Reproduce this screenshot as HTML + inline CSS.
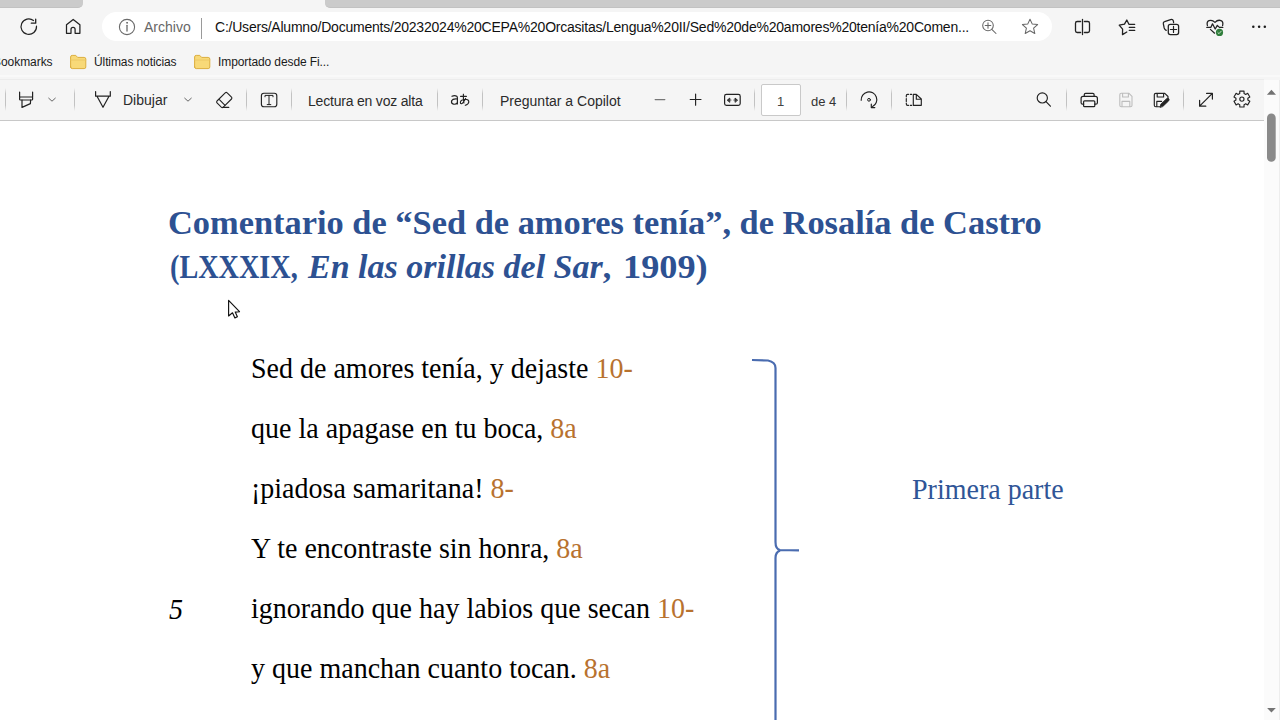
<!DOCTYPE html>
<html><head><meta charset="utf-8">
<style>
*{margin:0;padding:0;box-sizing:border-box}
html,body{width:1280px;height:720px;overflow:hidden;background:#fff;font-family:"Liberation Sans",sans-serif}
#chrome{position:absolute;left:0;top:0;width:1280px;height:121px;background:#f5f5f5}
.tabg{position:absolute;top:0;height:8px;background:#cbcbcb;border-bottom:1px solid #c2c2c2}
#addr{position:absolute;left:102px;top:12px;width:950px;height:29px;background:#fff;border-radius:15px}
.t{position:absolute;font-family:"Liberation Sans",sans-serif;color:#1b1b1b;white-space:nowrap;line-height:1}
#pdfbar{position:absolute;left:0;top:79px;width:1264px;height:42px;background:#f5f5f5;border-top:1px solid #ececec;border-bottom:1px solid #c8c8c8}
.sep{position:absolute;width:1px;top:88px;height:23px;background:linear-gradient(rgba(200,200,200,0),#c2c2c2 25%,#c2c2c2 75%,rgba(200,200,200,0))}
svg.i{position:absolute;left:0;top:0;overflow:visible;fill:none;stroke:#222;stroke-width:1.15;stroke-linecap:round;stroke-linejoin:round}
#doc{position:absolute;left:0;top:121px;width:1264px;height:599px;background:#fff}
.s{position:absolute;font-family:"Liberation Serif",serif;white-space:nowrap;line-height:1}
.title{font-weight:bold;color:#2d5192;font-size:34px;transform-origin:0 0}
.verse{color:#000;font-size:28px;transform-origin:0 0;transform:scaleY(1.04)}
.met{color:#b8722f}
#sb{position:absolute;left:1264px;top:80px;width:16px;height:640px;background:#fbfbfb}
</style></head><body>
<div id="chrome">
  <div class="tabg" style="left:0;width:83px;border-radius:0 0 5px 0"></div>
  <div class="tabg" style="left:325px;width:955px;border-radius:0 0 0 5px"></div>
  <div id="addr"></div>
  <div style="position:absolute;left:0;top:75px;width:1280px;height:2px;background:#f9f9f9"></div>
  <div id="pdfbar"></div>
</div>

<!-- top nav icons -->
<svg class="i" width="1" height="1">
  <!-- refresh -->
  <path d="M36.5 26.2 A7.75 7.75 0 1 1 33.5 20.5" stroke-width="1.2"/>
  <path d="M35.7 19.2 L35.7 23.2 L31.3 23.2" stroke-width="1.3"/>
  <!-- home -->
  <path d="M66.5 33.3 L66.5 24.8 L73.2 19.4 L79.9 24.8 L79.9 33.3 L75.1 33.3 L75.1 29.5 A2.05 2.05 0 0 0 71 29.5 L71 33.3 Z" stroke-width="1.25"/>
  <!-- info -->
  <circle cx="127" cy="27" r="7.6" stroke="#6a6a6a" stroke-width="1.1"/>
  <path d="M127 25.3 L127 31" stroke="#6a6a6a" stroke-width="1.3"/>
  <circle cx="127" cy="22.8" r="0.5" fill="#6a6a6a" stroke="#6a6a6a" stroke-width="0.9"/>
  <!-- zoom -->
  <circle cx="988" cy="25.5" r="5.3" stroke="#666" stroke-width="1.05"/>
  <path d="M985.2 25.5 L990.8 25.5 M988 22.7 L988 28.3 M991.8 29.3 L996 33.5" stroke="#666" stroke-width="1.05"/>
  <!-- star -->
  <path d="M1030 19.2 L1032.3 24.1 L1037.6 24.6 L1033.6 28.2 L1034.8 33.5 L1030 30.8 L1025.2 33.5 L1026.4 28.2 L1022.4 24.6 L1027.7 24.1 Z" stroke="#666" stroke-width="1.05"/>
  <!-- split screen -->
  <path d="M1080.6 21.5 L1077.2 21.5 Q1075.5 21.5 1075.5 23.2 L1075.5 30.8 Q1075.5 32.5 1077.2 32.5 L1080.6 32.5 M1084.4 21.5 L1087.8 21.5 Q1089.5 21.5 1089.5 23.2 L1089.5 30.8 Q1089.5 32.5 1087.8 32.5 L1084.4 32.5 M1082.5 19.3 L1082.5 34.6" stroke-width="1.3"/>
  <!-- favorites -->
  <path d="M1126.8 32 L1122.5 34.6 L1122.6 29.2 L1119.2 25.2 L1124.5 24.1 L1126.8 20 L1128.9 24.3 L1134.7 24.3 M1129.3 27.4 L1134.7 27.4 M1129.3 30.4 L1134.7 30.4" stroke-width="1.3"/>
  <!-- collections -->
  <path d="M1166.2 30.4 Q1164.6 29.5 1164.2 28 L1163.3 23.6 Q1163 22 1164.6 21.6 L1170.6 19.6 Q1172.8 19 1173.4 21 L1173.6 22.6" stroke-width="1.25"/>
  <rect x="1168.3" y="24.3" width="10.3" height="10.3" rx="2" stroke-width="1.3"/>
  <path d="M1173.5 26.4 L1173.5 32.5 M1170.4 29.5 L1176.6 29.5" stroke-width="1.2"/>
  <!-- health -->
  <path d="M1207.4 25.6 Q1206.4 21.6 1209 20.6 Q1212.2 19.4 1215 22.4 Q1217.8 19.4 1221 20.6 Q1223.6 21.6 1222.6 25.6" stroke-width="1.25"/>
  <path d="M1206.8 27.4 L1210.8 27.4 L1212.5 23.8 L1215.2 29 L1217.3 25.4 L1219.4 27.4 L1222.8 27.4 M1210.4 29.4 L1214.6 33.2" stroke-width="1.25"/>
  <circle cx="1219.5" cy="32.4" r="3.6" fill="#2f7d3b" stroke="none"/>
  <path d="M1217.9 32.6 L1219 33.7 L1221.2 31.2" stroke="#cfe8cf" stroke-width="0.9"/>
  <!-- more -->
  <circle cx="1253.3" cy="26.8" r="1.25" fill="#1a1a1a" stroke="none"/>
  <circle cx="1259.1" cy="26.8" r="1.25" fill="#1a1a1a" stroke="none"/>
  <circle cx="1264.8" cy="26.8" r="1.25" fill="#1a1a1a" stroke="none"/>
</svg>
<div style="position:absolute;left:201px;top:18px;width:1px;height:21px;background:#9a9a9a"></div>

<div class="t" style="left:144px;top:20px;font-size:14px;letter-spacing:0px;color:#676767">Archivo</div>
<div class="t" style="left:215px;top:20px;font-size:14px;letter-spacing:-0.22px;color:#111">C:/Users/Alumno/Documents/20232024%20CEPA%20Orcasitas/Lengua%20II/Sed%20de%20amores%20tenía%20Comen...</div>

<!-- bookmarks bar -->
<div class="t" style="left:-7px;top:56px;font-size:12px;letter-spacing:-0.05px">Bookmarks</div>
<svg class="i" width="1" height="1">
  <path d="M70.6 67 L70.6 57 Q70.6 55.4 72.2 55.4 L75.8 55.4 L77.6 57.4 L84.2 57.4 Q85.8 57.4 85.8 59 L85.8 67 Q85.8 68.6 84.2 68.6 L72.2 68.6 Q70.6 68.6 70.6 67 Z" fill="#f8d978" stroke="#dcae3e" stroke-width="1"/>
  <path d="M70.6 60 L85.8 60" stroke="#e8c460" stroke-width="0.8"/>
  <path d="M194.6 67 L194.6 57 Q194.6 55.4 196.2 55.4 L199.8 55.4 L201.6 57.4 L208.2 57.4 Q209.8 57.4 209.8 59 L209.8 67 Q209.8 68.6 208.2 68.6 L196.2 68.6 Q194.6 68.6 194.6 67 Z" fill="#f8d978" stroke="#dcae3e" stroke-width="1"/>
  <path d="M194.6 60 L209.8 60" stroke="#e8c460" stroke-width="0.8"/>
</svg>
<div class="t" style="left:94px;top:56px;font-size:12px;letter-spacing:-0.1px">Últimas noticias</div>
<div class="t" style="left:218px;top:56px;font-size:12px;letter-spacing:-0.1px">Importado desde Fi...</div>

<!-- pdf toolbar -->
<div class="sep" style="left:5px"></div>
<div class="sep" style="left:74px"></div>
<div class="sep" style="left:246px"></div>
<div class="sep" style="left:291px"></div>
<div class="sep" style="left:437px"></div>
<div class="sep" style="left:482px"></div>
<div class="sep" style="left:754px"></div>
<div class="sep" style="left:846px"></div>
<div class="sep" style="left:891px"></div>
<div class="sep" style="left:1066px"></div>
<div class="sep" style="left:1183px"></div>

<svg class="i" width="1" height="1">
  <!-- highlighter -->
  <path d="M19.6 92 L19.6 97 M32.6 92 L32.6 97" stroke-width="1.2"/>
  <rect x="19.6" y="97" width="13" height="3" rx="0.8" stroke-width="1.2"/>
  <path d="M22 100 L22 107.4 L30.4 103.6 L30.6 100" stroke-width="1.2"/>
  <path d="M48.7 98.2 L52 101.2 L55.3 98.2" stroke="#555" stroke-width="0.9"/>
  <!-- draw -->
  <path d="M95.6 91.5 L95.6 96.2 M110.3 91.5 L110.3 96.2 M95.6 96.2 L110.3 96.2 M97 96.2 L103 107.3 L109 96.2" stroke-width="1.2"/>
  <path d="M184.7 98.2 L188 101.2 L191.3 98.2" stroke="#555" stroke-width="0.9"/>
  <!-- eraser -->
  <path d="M217 101 L225.2 92.8 Q226.2 91.9 227.2 92.8 L231.5 97.1 Q232.4 98.1 231.5 99 L223.3 107.2 Q222.3 108.1 221.3 107.2 L217 102.9 Q216.1 102 217 101 Z" stroke-width="1.1"/>
  <path d="M219.4 99.6 L224.8 105.1 M222.5 107.4 L228.8 107.4" stroke-width="1.1"/>
  <!-- T box -->
  <rect x="261.4" y="93.2" width="15.4" height="13.5" rx="2.5" stroke-width="1.15"/>
  <path d="M265 96.8 L265 95.4 L273 95.4 L273 96.8 M269 95.4 L269 104.6 M267.2 104.6 L270.8 104.6" stroke-width="1"/>
  <!-- aあ -->
  <path d="M452 96.3 Q454.6 94.8 456.8 96.3 Q457.4 96.8 457.4 98 L457.4 104 M457.4 99 Q452.8 98.4 451.6 100.8 Q451 103.6 453.6 104.2 Q456.2 104.6 457.4 102.6" stroke-width="1.2"/>
  <path d="M460.6 96.4 L466.4 96.4 M463.4 94.2 Q463.2 99.5 463.9 103 M465.6 98.4 Q462.9 103.6 461.2 103.8 Q460.3 103.7 460.4 102.2 Q460.9 99.6 465.2 99.2 Q468.9 99.3 468.8 102 Q468.5 104.4 465.3 105.3" stroke-width="1.15"/>
  <!-- minus / plus -->
  <path d="M655.2 99.6 L664.8 99.6" stroke="#777" stroke-width="1.3"/>
  <path d="M690.2 99.5 L701 99.5 M695.6 94 L695.6 105.2" stroke-width="1.15"/>
  <!-- fit width -->
  <rect x="724.6" y="94.4" width="15.6" height="11" rx="1.8" stroke-width="1.2"/>
  <path d="M727.4 100 L729.8 98 L729.8 102 Z M737.4 100 L735 98 L735 102 Z" fill="#222" stroke-width="0.8"/>
  <path d="M729.5 100 L731 100 M733.8 100 L735.3 100" stroke-width="1.1" stroke="#555"/>
  <!-- rotate -->
  <path d="M861.2 100.3 A7.8 7.8 0 1 1 872.6 106.6" stroke-width="1.15"/>
  <path d="M871.3 104.2 L871.3 107.6 L874.8 107.6" stroke-width="1.2"/>
  <circle cx="869" cy="99.8" r="1.4" stroke-width="1"/>
  <!-- two pages -->
  <path d="M911.7 94.3 L910.3 94.3 M908.6 94.3 L907.6 94.3 Q906.3 94.3 906.3 95.6 L906.3 96.8 M906.3 98.6 L906.3 101.4 M906.3 103 L906.3 104 Q906.3 105.3 907.6 105.3 L908.6 105.3 M910.3 105.3 L911.7 105.3" stroke-width="1.15"/>
  <path d="M913.3 94.3 L916.3 94.3 L921.3 99 L921.3 105.3 L913.3 105.3 Z M916.3 94.3 L916.3 99.2 L921.3 99.2" stroke-width="1.15"/>
  <!-- search -->
  <circle cx="1042.3" cy="97.9" r="5.1" stroke-width="1.15"/>
  <path d="M1046 101.7 L1050.4 106.2" stroke-width="1.2"/>
  <!-- print -->
  <path d="M1084.3 96.4 L1084.3 94.6 Q1084.3 93.3 1085.6 93.3 L1092.8 93.3 Q1094.1 93.3 1094.1 94.6 L1094.1 96.4" stroke-width="1.2"/>
  <path d="M1083.6 104.2 L1082.6 104.2 Q1081.1 104.2 1081.1 102.7 L1081.1 98.4 Q1081.1 96.4 1083.1 96.4 L1095.4 96.4 Q1097.4 96.4 1097.4 98.4 L1097.4 102.7 Q1097.4 104.2 1095.9 104.2 L1094.8 104.2" stroke-width="1.2"/>
  <rect x="1083.6" y="100.8" width="11.2" height="5.9" rx="1" stroke-width="1.2"/>
  <!-- save disabled -->
  <path d="M1119.8 94.8 Q1119.8 93.3 1121.3 93.3 L1129 93.3 L1132 96.3 L1132 105.2 Q1132 106.7 1130.5 106.7 L1121.3 106.7 Q1119.8 106.7 1119.8 105.2 Z M1122.6 93.3 L1122.6 97 L1128.4 97 L1128.4 93.3 M1122 106.7 L1122 101.4 L1129.8 101.4 L1129.8 106.7" stroke="#bdbdbd" stroke-width="1.1"/>
  <!-- save as -->
  <path d="M1160 106.7 L1155.8 106.7 Q1154.3 106.7 1154.3 105.2 L1154.3 94.8 Q1154.3 93.3 1155.8 93.3 L1164.8 93.3 L1168 96.5 L1168 98.6 M1157.2 93.3 L1157.2 97 L1163.6 97 L1163.6 93.3 M1156.8 106.7 L1156.8 101.4 L1161.6 101.4" stroke-width="1.15"/>
  <path d="M1160.2 107 L1160.9 104.2 L1166.6 98.7 Q1167.8 97.8 1168.8 98.8 Q1169.6 99.9 1168.6 100.9 L1163 106.3 Z" fill="#222" stroke-width="0.9"/>
  <!-- expand -->
  <path d="M1199.6 106.2 L1212.4 93.4 M1206.6 93.4 L1212.4 93.4 L1212.4 99.1 M1199.6 100.3 L1199.6 106.2 L1205.8 106.2" stroke-width="1.2"/>
  <!-- settings -->
  <path d="M1238.90 93.90 L1239.75 93.50 L1239.78 91.18 L1244.02 91.18 L1244.05 93.50 L1244.90 93.90 L1245.68 94.44 L1247.70 93.30 L1249.82 96.98 L1247.83 98.16 L1247.90 99.10 L1247.83 100.04 L1249.82 101.22 L1247.70 104.90 L1245.68 103.76 L1244.90 104.30 L1244.05 104.70 L1244.02 107.02 L1239.78 107.02 L1239.75 104.70 L1238.90 104.30 L1238.12 103.76 L1236.10 104.90 L1233.98 101.22 L1235.97 100.04 L1235.90 99.10 L1235.97 98.16 L1233.98 96.98 L1236.10 93.30 L1238.12 94.44 Z" stroke-width="1.15"/>
  <circle cx="1241.9" cy="99.1" r="2.1" stroke-width="1.15"/>
</svg>

<div class="t" style="left:123px;top:93px;font-size:14px;color:#2b2b2b">Dibujar</div>
<div class="t" style="left:308px;top:94px;font-size:14px;letter-spacing:-0.2px;color:#2b2b2b">Lectura en voz alta</div>
<div class="t" style="left:500px;top:94px;font-size:14px;color:#2b2b2b">Preguntar a Copilot</div>
<div style="position:absolute;left:761px;top:84px;width:40px;height:32px;background:#fff;border:1px solid #c9c9c9;border-radius:2px"></div>
<div class="t" style="left:777px;top:95px;font-size:13px;color:#444">1</div>
<div class="t" style="left:811px;top:95px;font-size:13px;color:#333">de 4</div>

<!-- document -->
<div id="doc"></div>
<div class="s title" style="left:168px;top:206px;transform:scaleX(1.0116)">Comentario de “Sed de amores tenía”, de Rosalía de Castro</div>
<div class="s title" style="left:170px;top:250px;transform:scaleX(0.83)">(LXXXIX,</div>
<div class="s title" style="left:308px;top:250px"><i>En las orillas del Sar</i>,</div>
<div class="s title" style="left:623px;top:250px;transform:scaleX(1.068)">1909)</div>

<div class="s verse" style="left:251px;top:354px">Sed de amores tenía, y dejaste <span class="met">10-</span></div>
<div class="s verse" style="left:251px;top:414px">que la apagase en tu boca, <span class="met">8a</span></div>
<div class="s verse" style="left:251px;top:474px">¡piadosa samaritana! <span class="met">8-</span></div>
<div class="s verse" style="left:251px;top:534px">Y te encontraste sin honra, <span class="met">8a</span></div>
<div class="s verse" style="left:169px;top:595px;font-style:italic">5</div>
<div class="s verse" style="left:251px;top:594px">ignorando que hay labios que secan <span class="met">10-</span></div>
<div class="s verse" style="left:251px;top:654px">y que manchan cuanto tocan. <span class="met">8a</span></div>
<div class="s verse" style="left:912px;top:475px;color:#2f5597">Primera parte</div>

<svg style="position:absolute;left:0;top:0;overflow:visible" width="1" height="1">
  <path d="M752 360 L768 360.5 Q775.5 362 775.5 368 L775.5 542 Q775.5 549 780 550 L799 550.3 M780 550.6 Q775.5 552 775.5 558 L775.5 730" fill="none" stroke="#4a6cb0" stroke-width="2.2"/>
  <!-- cursor -->
  <path d="M228.6 300.4 L228.6 316 L232.5 312.8 L234.9 317.9 L237.4 316.8 L235.2 312.1 L239.5 311.7 Z" fill="#fff" stroke="#111" stroke-width="1.15" stroke-linejoin="round"/>
</svg>

<div id="sb"></div>
<svg style="position:absolute;left:0;top:0;overflow:visible" width="1" height="1">
  <path d="M1266.9 94.8 L1271.45 89.8 L1276 94.8 Z" fill="#727272"/>
  <rect x="1267" y="113.6" width="8.7" height="48.2" rx="4.35" fill="#8a8a8a"/>
  <path d="M1267.1 707.9 L1271.45 712.6 L1275.8 707.9 Z" fill="#747474"/>
  <rect x="1279" y="80" width="1" height="640" fill="#ededed"/>
</svg>
</body></html>
